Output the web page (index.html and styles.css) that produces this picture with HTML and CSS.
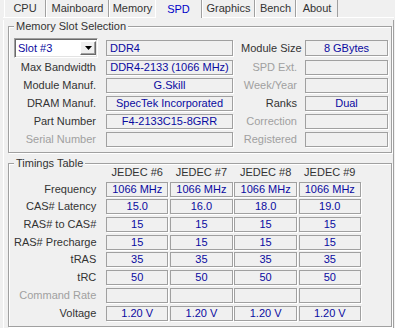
FILE: index.html
```html
<!DOCTYPE html>
<html lang="en">
<head>
    <meta charset="UTF-8">
    <meta name="viewport" content="width=device-width, initial-scale=1.0">
    <title>CPU-Z - SPD</title>
    <link rel="stylesheet" href="styles.css">
</head>
<body>
    <div class="tabs">
        <span class="tab">CPU</span>
        <span class="tab">Mainboard</span>
        <span class="tab">Memory</span>
        <span class="tab tab-on">SPD</span>
        <span class="tab">Graphics</span>
        <span class="tab">Bench</span>
        <span class="tab">About</span>
    </div>
    <div class="panel">
        <fieldset class="group">
            <legend>Memory Slot Selection</legend>
            <div class="slot-grid">
                <div class="combo">
                    <span class="combo-text">Slot #3</span>
                    <span class="combo-btn"><svg width="7" height="4" viewBox="0 0 7 4"><path d="M0 0h7L3.5 4z" fill="#000"/></svg></span>
                </div>
                <div class="field field-top field-left">DDR4</div>
                <div class="label">Module Size</div>
                <div class="field field-top">8 GBytes</div>

                <div class="label">Max Bandwidth</div>
                <div class="field">DDR4-2133 (1066 MHz)</div>
                <div class="label off">SPD Ext.</div>
                <div class="field"></div>

                <div class="label">Module Manuf.</div>
                <div class="field">G.Skill</div>
                <div class="label off">Week/Year</div>
                <div class="field"></div>

                <div class="label">DRAM Manuf.</div>
                <div class="field">SpecTek Incorporated</div>
                <div class="label">Ranks</div>
                <div class="field">Dual</div>

                <div class="label">Part Number</div>
                <div class="field">F4-2133C15-8GRR</div>
                <div class="label off">Correction</div>
                <div class="field"></div>

                <div class="label off">Serial Number</div>
                <div class="field"></div>
                <div class="label off">Registered</div>
                <div class="field"></div>
            </div>
        </fieldset>

        <fieldset class="group group-time">
            <legend>Timings Table</legend>
            <div class="time-grid">
                <div></div>
                <div class="head">JEDEC #6</div>
                <div class="head">JEDEC #7</div>
                <div class="head">JEDEC #8</div>
                <div class="head">JEDEC #9</div>

                <div class="label">Frequency</div>
                <div class="field">1066 MHz</div>
                <div class="field">1066 MHz</div>
                <div class="field">1066 MHz</div>
                <div class="field">1066 MHz</div>

                <div class="label">CAS# Latency</div>
                <div class="field">15.0</div>
                <div class="field">16.0</div>
                <div class="field">18.0</div>
                <div class="field">19.0</div>

                <div class="label">RAS# to CAS#</div>
                <div class="field">15</div>
                <div class="field">15</div>
                <div class="field">15</div>
                <div class="field">15</div>

                <div class="label">RAS# Precharge</div>
                <div class="field">15</div>
                <div class="field">15</div>
                <div class="field">15</div>
                <div class="field">15</div>

                <div class="label">tRAS</div>
                <div class="field">35</div>
                <div class="field">35</div>
                <div class="field">35</div>
                <div class="field">35</div>

                <div class="label">tRC</div>
                <div class="field">50</div>
                <div class="field">50</div>
                <div class="field">50</div>
                <div class="field">50</div>

                <div class="label off">Command Rate</div>
                <div class="field"></div>
                <div class="field"></div>
                <div class="field"></div>
                <div class="field"></div>

                <div class="label">Voltage</div>
                <div class="field">1.20 V</div>
                <div class="field">1.20 V</div>
                <div class="field">1.20 V</div>
                <div class="field">1.20 V</div>
            </div>
        </fieldset>
    </div>
</body>
</html>
```

FILE: styles.css
```css
* {
    box-sizing: border-box;
}

body {
    margin: 0;
    background: #f0f0f0;
    color: #333;
    font: 11px/13px "Liberation Sans", Arial, sans-serif;
    overflow: hidden;
}

.tabs {
    display: grid;
    grid-template-columns: 42px 63px 47px 46px 53px 41px 42px;
    height: 18px;
    margin: 0 1px 0 3px;
    padding-left: 1px;
    border-bottom: 1px solid #fff;
}

.tab {
    display: flex;
    align-items: center;
    justify-content: center;
    border-left: 1px solid #fff;
    border-right: 1px solid #a0a0a0;
    white-space: nowrap;
}

.tab-on {
    margin: 0 0 -1px -1px;
    background: #f0f0f0;
    color: #0000c8;
}

.panel {
    min-height: calc(100vh - 18px);
    margin: 0 1px 0 3px;
    padding: 0 1px 6px 4px;
    border-left: 1px solid #fff;
    border-right: 1px solid #a0a0a0;
}

.group {
    min-width: 0;
    margin: 2px 0 0;
    padding: 6px 3px 5px 5px;
    border: 1px solid #a0a0a0;
    box-shadow: inset 1px 1px 0 #fff, 1px 1px 0 #fff;
}

.group-time {
    margin-top: 4px;
    padding-top: 0;
}

legend {
    padding: 0 2px;
    background: #f0f0f0;
    line-height: 13px;
}

.slot-grid {
    display: grid;
    grid-template-columns: 84px 127px 56px 83px;
    grid-template-rows: 18px;
    grid-auto-rows: 15px;
    gap: 3px 8px;
}

.time-grid {
    display: grid;
    grid-template-columns: 90.3px repeat(4, 62.5px);
    grid-template-rows: 13px;
    grid-auto-rows: 15px;
    gap: 2.7px 1.7px;
    margin-top: -4px;
}

.label {
    align-self: center;
    text-align: right;
    white-space: nowrap;
}

.slot-grid .label:nth-child(4n+1) {
    padding-right: 2px;
}

.time-grid .label {
    padding-right: 8px;
}

.off {
    color: #a0a0a0;
}

.head {
    text-align: center;
    white-space: nowrap;
}

.field {
    border: 1px solid #a0a0a0;
    box-shadow: 1px 1px 0 #fff;
    color: #0a0aa0;
    text-align: center;
    white-space: nowrap;
    overflow: hidden;
}

.field-top {
    align-self: center;
    height: 16px;
    line-height: 14px;
}

.field-left {
    padding-left: 3px;
    text-align: left;
}

.combo {
    display: flex;
    align-items: stretch;
    margin: -1px 0;
    padding: 2px 1px 2px 2px;
    background: #fff;
    border: 1px solid;
    border-color: #a0a0a0 #fff #fff #a0a0a0;
    box-shadow: inset 1px 1px 0 #696969, inset -1px -1px 0 #e3e3e3;
}

.combo-text {
    flex: 1;
    align-self: center;
    padding-left: 1px;
    color: #0a0aa0;
}

.combo-btn {
    display: flex;
    align-items: center;
    justify-content: center;
    width: 16px;
    background: #f0f0f0;
    border: 1px solid;
    border-color: #fff #696969 #696969 #fff;
    box-shadow: inset -1px -1px 0 #a0a0a0;
}
```
